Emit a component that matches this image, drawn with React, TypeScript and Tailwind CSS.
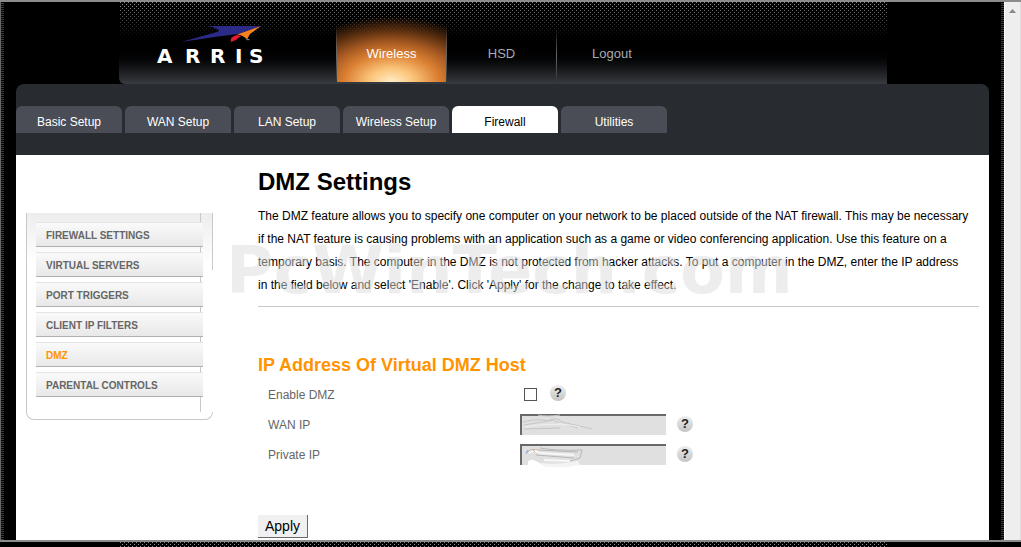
import { useState } from 'react';

const mainNav = ['Wireless', 'HSD', 'Logout'];
const tabs = ['Basic Setup', 'WAN Setup', 'LAN Setup', 'Wireless Setup', 'Firewall', 'Utilities'];
const sideLinks = [
  'Firewall Settings',
  'Virtual Servers',
  'Port Triggers',
  'Client IP Filters',
  'DMZ',
  'Parental Controls',
];

function Logo() {
  return (
    <svg width="112" height="44" viewBox="0 0 112 44" className="block" role="img" aria-label="ARRIS">
      <path d="M54 4 H107 L84 12 L64 14.5 L27 20 L63 10 Q66 9 64 7.5 Q60 5 54 4 Z" fill="#2b2a86" />
      <path d="M107 4 L83 12.5 Q89 13 93 17.5 L96 12 Z" fill="#f58220" />
      <path d="M77 20 Q75 15 83 13 L87 14 Q83 18 77 20 Z" fill="#e31b35" />
      <text x="92" y="20" fontSize="4" fill="#fff" fontFamily="DejaVu Sans, sans-serif">™</text>
      <text
        x="3 31 56 81 95"
        y="41"
        fontSize="20"
        fontWeight="700"
        fill="#fff"
        fontFamily="DejaVu Sans, sans-serif"
      >
        ARRIS
      </text>
    </svg>
  );
}

function Dots({ className }: { className: string }) {
  return (
    <svg className={className} aria-hidden="true">
      <defs>
        <pattern id="dots" width="4" height="4" patternUnits="userSpaceOnUse">
          <rect x="1" y="0" width="1" height="1" fill="#8a8c90" />
          <rect x="3" y="2" width="1" height="1" fill="#8a8c90" />
        </pattern>
      </defs>
      <rect width="100%" height="100%" fill="url(#dots)" />
    </svg>
  );
}

function Header() {
  return (
    <header className="relative ml-[115px] mr-[114px] flex h-[82px] rounded-bl-md bg-linear-to-b from-black from-55% to-[#383b40] pl-[35px]">
      <Dots className="absolute inset-x-0 top-0 h-9 w-full mask-b-from-10%" />
      <div className="relative w-[182px] pt-5">
        <Logo />
      </div>
      <nav className="relative flex items-end text-[13px]">
        {mainNav.map((item, i) => (
          <a
            key={item}
            href="#"
            className={
              i === 0
                ? 'mb-0.5 flex h-[68px] w-[111px] items-center justify-center border-x bg-[radial-gradient(ellipse_110px_66px_at_50%_100%,#ffedc8_0%,#fbc67c_20%,#dd8234_42%,#a85a22_60%,#5c3010_78%,transparent_100%)] pt-3 text-white [border-image:linear-gradient(transparent_20%,#666_60%,#333)_1]'
                : i === 1
                  ? 'mb-0.5 flex h-[54px] w-[110px] items-center justify-center border-r pb-0.5 text-[#a9abb0] [border-image:linear-gradient(transparent,#666_50%,#333)_1]'
                  : 'mb-0.5 flex h-[54px] w-[110px] items-center justify-center pb-0.5 text-[#a9abb0]'
            }
          >
            {item}
          </a>
        ))}
      </nav>
    </header>
  );
}

function Tabs({ active, onSelect }: { active: string; onSelect: (tab: string) => void }) {
  return (
    <nav className="flex h-[71px] gap-[3px] rounded-t-lg bg-[#282b2f] pt-[22px]">
      {tabs.map((tab) => (
        <button
          key={tab}
          type="button"
          onClick={() => onSelect(tab)}
          className={`h-[27px] w-[106px] rounded-t-md pt-1 text-xs ${
            tab === active ? 'bg-white text-black' : 'bg-[#4a4d55] text-white'
          }`}
        >
          {tab}
        </button>
      ))}
    </nav>
  );
}

function Sidebar() {
  return (
    <aside className="w-[187px] shrink-0 pt-[58px]">
      <div className="relative border-l border-[#c8c8c8] bg-linear-to-b from-[#ededed] to-white to-25% pt-[9px] pb-[15px]">
        <span className="absolute top-0 right-0 h-[57px] w-px bg-[#c8c8c8]" />
        <span className="absolute top-0 right-3 bottom-0 w-px bg-[#c8c8c8]" />
        <ul className="relative mr-2.5 ml-[9px] space-y-[5px]">
          {sideLinks.map((link) => (
            <li key={link}>
              <a
                href="#"
                className={`flex h-[25px] items-center border-t border-b border-t-[#e4e4e4] border-b-[#b0b0b0] bg-linear-to-b from-[#fafafa] to-[#e8e8e8] pt-0.5 pl-2.5 text-[10px] font-bold uppercase ${
                  link === 'DMZ' ? 'text-[#ff9400]' : 'text-[#666]'
                }`}
              >
                {link}
              </a>
            </li>
          ))}
        </ul>
      </div>
      <div className="h-2 rounded-b-lg border-x border-b border-[#c8c8c8]" />
    </aside>
  );
}

function Help({ topic }: { topic: string }) {
  return (
    <button
      type="button"
      aria-label={`Help: ${topic}`}
      className="flex size-4 shrink-0 items-center justify-center rounded-full bg-linear-to-b from-[#eee] to-[#c4c4c4] text-[13px] leading-4 font-bold text-[#222]"
    >
      ?
    </button>
  );
}

function WanSmudge() {
  return (
    <svg className="pointer-events-none absolute top-0 left-0" width="110" height="24" fill="none">
      <path d="M18 1 Q26 3 40 1" stroke="#c8c8c8" />
      <path
        d="M3 8 Q18 4 28 7 Q36 2 42 8 L72 15 M4 11 Q22 8 34 6 M4 15 L40 14 M34 7 L58 14"
        stroke="#c6c6c6"
      />
      <path d="M5 13 Q24 9 46 11 M38 9 L60 13" stroke="#efefef" />
    </svg>
  );
}

function PrivateSmudge() {
  return (
    <svg className="pointer-events-none absolute top-0 left-0" width="110" height="28" fill="none">
      <path d="M8 18 Q9 14 16 17 L26 23 L10 22 L2 24 V21 H8 Z" fill="#fff" />
      <path d="M20 19 Q40 21 58 17 L60 21 L48 23 L26 23 Z" fill="#f3f3f3" />
      <path d="M6 10 Q9 4 18 6 L58 8 M16 11 L54 14 M20 4 Q36 7 62 6 L60 14 L50 17" stroke="#b8b8b8" />
      <path d="M9 9 Q14 5 20 9 L54 11 M24 16 L50 17" stroke="#f7f7f7" strokeWidth="2" />
      <path d="M8 6 L6 9" stroke="#79a5d5" />
      <path d="M12 5 L15 8" stroke="#dda875" />
    </svg>
  );
}

const fieldClass =
  'block h-[21px] w-[146px] border-t-2 border-l-2 border-[#696969] bg-[#e0e0e0] px-1 text-xs text-[#666] outline-none';

function DmzForm() {
  const [enabled, setEnabled] = useState(false);

  return (
    <form onSubmit={(e) => e.preventDefault()}>
      <h2 className="pt-[46px] text-[18px] leading-6 font-bold text-[#ff9400]">
        IP Address Of Virtual DMZ Host
      </h2>
      <div className="pt-[3px] pl-2.5 text-xs text-[#666]">
        <div className="flex h-[30px] items-center">
          <label htmlFor="enable" className="w-64">Enable DMZ</label>
          <input
            id="enable"
            type="checkbox"
            checked={enabled}
            onChange={(e) => setEnabled(e.target.checked)}
            className="mr-[13px] mb-0.5 size-[13px] appearance-none border border-[#555] bg-white checked:bg-[#555]"
          />
          <div className="pb-1">
            <Help topic="Enable DMZ" />
          </div>
        </div>
        <div className="flex h-[30px] items-center">
          <label htmlFor="wan" className="w-[252px]">WAN IP</label>
          <div className="flex items-center gap-[11px] pb-0.5">
            <div className="relative">
              <input id="wan" type="text" className={fieldClass} />
              <WanSmudge />
            </div>
            <Help topic="WAN IP" />
          </div>
        </div>
        <div className="flex h-[30px] items-center">
          <label htmlFor="private" className="w-[252px]">Private IP</label>
          <div className="flex items-center gap-[11px] pb-0.5">
            <div className="relative">
              <input id="private" type="text" className={fieldClass} />
              <PrivateSmudge />
            </div>
            <Help topic="Private IP" />
          </div>
        </div>
      </div>
      <button
        type="submit"
        className="mt-[45px] h-[23px] w-[50px] border-r border-b border-[#696969] bg-[#f0f0f0] text-[14px] leading-5 text-black"
      >
        Apply
      </button>
    </form>
  );
}

function Stripes() {
  return <div className="w-[3px] shrink-0 bg-[repeating-linear-gradient(#000_0_1px,#3a3c3e_1px_2px)]" />;
}

export default function App() {
  const [tab, setTab] = useState('Firewall');

  return (
    <div className="flex min-h-screen flex-col bg-black font-['Liberation_Sans',Arial,sans-serif]">
      <div className="flex flex-1 border-t-2 border-b-2 border-t-[#8c8c8c] border-b-[#8c8c8c]">
        <div className="w-px shrink-0 bg-[#696969]" />
        <Stripes />
        <div className="flex min-w-0 flex-1 flex-col">
          <Header />
          <div className="mr-3 ml-3 flex flex-1 flex-col">
            <Tabs active={tab} onSelect={setTab} />
            <div className="relative flex flex-1 bg-white pr-2.5 pl-2.5">
              <Sidebar />
              <main className="ml-[45px] flex-1 pt-3 pb-0.5">
                <h1 className="text-2xl leading-[30px] font-bold text-black">DMZ Settings</h1>
                <p className="border-b border-[#c8c8c8] pt-2 pb-[9px] text-xs leading-[23px] text-black">
                  The DMZ feature allows you to specify one computer on your network to be placed
                  outside of the NAT firewall. This may be necessary
                  <br />
                  if the NAT feature is causing problems with an application such as a game or video
                  conferencing application. Use this feature on a
                  <br />
                  temporary basis. The computer in the DMZ is not protected from hacker attacks. To
                  put a computer in the DMZ, enter the IP address
                  <br />
                  in the field below and select 'Enable'. Click 'Apply' for the change to take
                  effect.
                </p>
                <DmzForm />
              </main>
              <div className="pointer-events-none absolute top-20 left-[210px] font-['DejaVu_Sans',Verdana,sans-serif] text-[65px] leading-[72px] font-bold text-[#dcdcdc]/50 select-none">
                PcWinTech.com
              </div>
            </div>
          </div>
        </div>
        <Stripes />
        <div className="w-[17px] shrink-0 border-r border-l border-r-[#ddd] border-l-white bg-[#eee] pt-[7px]">
          <svg width="7" height="4" viewBox="0 0 7 4" className="mx-auto">
            <path d="M0 4 L3.5 0 L7 4 Z" fill="#888" />
          </svg>
        </div>
      </div>
      <div className="h-[5px] pr-[134px] pl-[119px]">
        <Dots className="block h-[5px] w-full" />
      </div>
    </div>
  );
}
